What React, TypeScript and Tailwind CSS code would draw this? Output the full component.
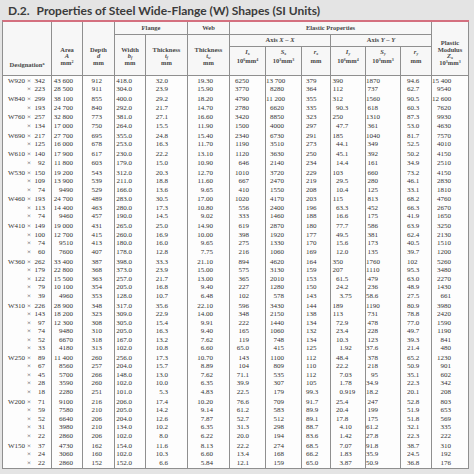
import React from 'react';

// AISC-style W shape table, SI units. Rows grouped by nominal depth.
type Group = { w: string; rows: string[][] };

const GROUPS: Group[] = [
	{ w: 'W920', rows: [
		['342', '43 600', '912', '418.0', '32.0', '19.30', '6250', '13 700', '379', '390', '1870', '94.6', '15 400'],
		['223', '28 500', '911', '304.0', '23.9', '15.90', '3770', '8280', '364', '112', '737', '62.7', '9540']
	] },
	{ w: 'W840', rows: [
		['299', '38 100', '855', '400.0', '29.2', '18.20', '4790', '11 200', '355', '312', '1560', '90.5', '12 600'],
		['193', '24 700', '840', '292.0', '21.7', '14.70', '2780', '6620', '335', '90.3', '618', '60.3', '7620']
	] },
	{ w: 'W760', rows: [
		['257', '32 800', '773', '381.0', '27.1', '16.60', '3420', '8850', '323', '250', '1310', '87.3', '9930'],
		['134', '17 000', '750', '264.0', '15.5', '11.90', '1500', '4000', '297', '47.7', '361', '53.0', '4630']
	] },
	{ w: 'W690', rows: [
		['217', '27 700', '695', '355.0', '24.8', '15.40', '2340', '6730', '291', '185', '1040', '81.7', '7570'],
		['125', '16 000', '678', '253.0', '16.3', '11.70', '1190', '3510', '273', '44.1', '349', '52.5', '4010']
	] },
	{ w: 'W610', rows: [
		['140', '17 900', '617', '230.0', '22.2', '13.10', '1120', '3630', '250', '45.1', '392', '50.2', '4150'],
		['92', '11 800', '603', '179.0', '15.0', '10.90', '646', '2140', '234', '14.4', '161', '34.9', '2510']
	] },
	{ w: 'W530', rows: [
		['150', '19 200', '543', '312.0', '20.3', '12.70', '1010', '3720', '229', '103', '660', '73.2', '4150'],
		['109', '13 900', '539', '211.0', '18.8', '11.60', '667', '2470', '219', '29.5', '280', '46.1', '2830'],
		['74', '9490', '529', '166.0', '13.6', '9.65', '410', '1550', '208', '10.4', '125', '33.1', '1810']
	] },
	{ w: 'W460', rows: [
		['193', '24 700', '489', '283.0', '30.5', '17.00', '1020', '4170', '203', '115', '813', '68.2', '4760'],
		['113', '14 400', '463', '280.0', '17.3', '10.80', '556', '2400', '196', '63.3', '452', '66.3', '2670'],
		['74', '9460', '457', '190.0', '14.5', '9.02', '333', '1460', '188', '16.6', '175', '41.9', '1650']
	] },
	{ w: 'W410', rows: [
		['149', '19 000', '431', '265.0', '25.0', '14.90', '619', '2870', '180', '77.7', '586', '63.9', '3250'],
		['100', '12 700', '415', '260.0', '16.9', '10.00', '398', '1920', '177', '49.5', '381', '62.4', '2130'],
		['74', '9510', '413', '180.0', '16.0', '9.65', '275', '1330', '170', '15.6', '173', '40.5', '1510'],
		['60', '7600', '407', '178.0', '12.8', '7.75', '216', '1060', '169', '12.0', '135', '39.7', '1200']
	] },
	{ w: 'W360', rows: [
		['262', '33 400', '387', '398.0', '33.3', '21.10', '894', '4620', '164', '350', '1760', '102', '5260'],
		['179', '22 800', '368', '373.0', '23.9', '15.00', '575', '3130', '159', '207', '1110', '95.3', '3480'],
		['122', '15 500', '363', '257.0', '21.7', '13.00', '365', '2010', '153', '61.5', '479', '63.0', '2270'],
		['79', '10 100', '354', '205.0', '16.8', '9.40', '227', '1280', '150', '24.2', '236', '48.9', '1430'],
		['39', '4960', '353', '128.0', '10.7', '6.48', '102', '578', '143', '3.75', '58.6', '27.5', '661']
	] },
	{ w: 'W310', rows: [
		['226', '28 900', '348', '317.0', '35.6', '22.10', '596', '3430', '144', '189', '1190', '80.9', '3980'],
		['143', '18 200', '323', '309.0', '22.9', '14.00', '348', '2150', '138', '113', '731', '78.8', '2420'],
		['97', '12 300', '308', '305.0', '15.4', '9.91', '222', '1440', '134', '72.9', '478', '77.0', '1590'],
		['74', '9480', '310', '205.0', '16.3', '9.40', '165', '1060', '132', '23.4', '228', '49.7', '1190'],
		['52', '6670', '318', '167.0', '13.2', '7.62', '119', '748', '134', '10.3', '123', '39.3', '841'],
		['33', '4180', '313', '102.0', '10.8', '6.60', '65.0', '415', '125', '1.92', '37.6', '21.4', '480']
	] },
	{ w: 'W250', rows: [
		['89', '11 400', '260', '256.0', '17.3', '10.70', '143', '1100', '112', '48.4', '378', '65.2', '1230'],
		['67', '8560', '257', '204.0', '15.7', '8.89', '104', '809', '110', '22.2', '218', '50.9', '901'],
		['45', '5700', '266', '148.0', '13.0', '7.62', '71.1', '535', '112', '7.03', '95', '35.1', '602'],
		['28', '3590', '260', '102.0', '10.0', '6.35', '39.9', '307', '105', '1.78', '34.9', '22.3', '342'],
		['18', '2280', '251', '101.0', '5.3', '4.83', '22.5', '179', '99.3', '0.919', '18.2', '20.1', '208']
	] },
	{ w: 'W200', rows: [
		['71', '9100', '216', '206.0', '17.4', '10.20', '76.6', '709', '91.7', '25.4', '247', '52.8', '803'],
		['59', '7580', '210', '205.0', '14.2', '9.14', '61.2', '583', '89.9', '20.4', '199', '51.9', '653'],
		['52', '6640', '206', '204.0', '12.6', '7.87', '52.7', '512', '89.1', '17.8', '175', '51.8', '569'],
		['31', '3980', '210', '134.0', '10.2', '6.35', '31.3', '298', '88.7', '4.10', '61.2', '32.1', '335'],
		['22', '2860', '206', '102.0', '8.0', '6.22', '20.0', '194', '83.6', '1.42', '27.8', '22.3', '222']
	] },
	{ w: 'W150', rows: [
		['37', '4730', '162', '154.0', '11.6', '8.13', '22.2', '274', '68.5', '7.07', '91.8', '38.7', '310'],
		['24', '3060', '160', '102.0', '10.3', '6.60', '13.4', '168', '66.2', '1.83', '35.9', '24.5', '192'],
		['22', '2860', '152', '152.0', '6.6', '5.84', '12.1', '159', '65.0', '3.87', '50.9', '36.8', '176']
	] }
];

/** How each numeric column lines up its figures (index 1..12 of a row) */
const COLS: { cls: string; dec?: boolean }[] = [
	{ cls: 'text-right pr-[9px]' },
	{ cls: 'text-right pr-[12px]' },
	{ cls: 'text-right pr-[13px]' },
	{ cls: 'text-right pr-[19px]' },
	{ cls: 'text-right pr-[16px]' },
	{ cls: 'text-right pr-[16px]' },
	{ cls: 'text-right pr-[17px]' },
	{ cls: 'text-left pl-[4px]' },
	{ cls: 'text-left', dec: true },
	{ cls: 'text-right pr-[22px]' },
	{ cls: 'text-left pl-[6px]' },
	{ cls: 'text-right pr-[17px]' }
];

const UNIT_COLS = ['col-start-7', 'col-start-8', 'col-start-9', 'col-start-10', 'col-start-11', 'col-start-12'];

const GRID = 'grid grid-cols-[49px_31px_32px_31px_42px_42px_36px_36px_29px_35px_35px_31px_37px]';
const LINE = 'border-[#8f8f8f]';

function Num({ v, dec }: { v: string; dec?: boolean }) {
	if (!dec) return <>{v}</>;
	const [int, frac] = v.split('.');
	return (
		<>
			<span className="inline-block w-[12px] text-right">{int}</span>
			{frac !== undefined ? `.${frac}` : ''}
		</>
	);
}

function HeadCell({ className, children }: { className: string; children: React.ReactNode }) {
	return (
		<div className={`flex flex-col items-center border-r border-b ${LINE} text-center ${className}`}>
			{children}
		</div>
	);
}

function Header() {
	return (
		<div className={`${GRID} grid-rows-[13px_12px_29px] bg-[#f7f7f7] font-['Liberation_Serif',serif] text-[6.5px] leading-[6.5px] font-bold text-[#474747]`}>
			<HeadCell className="col-start-1 row-span-3 row-start-1 justify-end pb-[7px]">
				<span>
					Designation<sup className="text-[4px]">a</sup>
				</span>
			</HeadCell>
			<HeadCell className="col-start-2 row-span-3 row-start-1 justify-end pb-[9px]">
				<span>Area</span>
				<span className="italic">A</span>
				<span>
					mm<sup className="text-[4px]">2</sup>
				</span>
			</HeadCell>
			<HeadCell className="col-start-3 row-span-3 row-start-1 justify-end pb-[9px]">
				<span>Depth</span>
				<span className="italic">d</span>
				<span>mm</span>
			</HeadCell>
			<HeadCell className="col-span-2 col-start-4 row-start-1 justify-center">
				<span>Flange</span>
			</HeadCell>
			<HeadCell className="col-start-6 row-start-1 justify-center">
				<span>Web</span>
			</HeadCell>
			<HeadCell className="col-span-6 col-start-7 row-start-1 justify-center">
				<span>Elastic Properties</span>
			</HeadCell>
			<HeadCell className="col-start-13 row-span-3 row-start-1 justify-end pb-[9px]">
				<span>Plastic</span>
				<span>Modulus</span>
				<span className="italic">
					Z<sub className="text-[4px]">x</sub>
				</span>
				<span>
					10<sup className="text-[4px]">3</sup>mm<sup className="text-[4px]">3</sup>
				</span>
			</HeadCell>
			<HeadCell className="col-start-4 row-span-2 row-start-2 justify-end pb-[9px]">
				<span>Width</span>
				<span className="italic">
					b<sub className="text-[4px]">f</sub>
				</span>
				<span>mm</span>
			</HeadCell>
			<HeadCell className="col-start-5 row-span-2 row-start-2 justify-end pb-[9px]">
				<span>Thickness</span>
				<span className="italic">
					t<sub className="text-[4px]">f</sub>
				</span>
				<span>mm</span>
			</HeadCell>
			<HeadCell className="col-start-6 row-span-2 row-start-2 justify-end pb-[9px]">
				<span>Thickness</span>
				<span className="italic">
					t<sub className="text-[4px]">w</sub>
				</span>
				<span>mm</span>
			</HeadCell>
			<HeadCell className="col-span-3 col-start-7 row-start-2 justify-center">
				<span>
					Axis <i>X</i> – <i>X</i>
				</span>
			</HeadCell>
			<HeadCell className="col-span-3 col-start-10 row-start-2 justify-center">
				<span>
					Axis <i>Y</i> – <i>Y</i>
				</span>
			</HeadCell>
			{[
				['I', 'x', '6', '4'],
				['S', 'x', '3', '3'],
				['r', 'x', '', ''],
				['I', 'y', '6', '4'],
				['S', 'y', '3', '3'],
				['r', 'y', '', '']
			].map(([sym, ax, p, q], i) => (
				<HeadCell key={i} className={`${UNIT_COLS[i]} row-start-3 justify-end gap-[2px] pb-[11px]`}>
					<span className="italic">
						{sym}
						<sub className="text-[4px]">{ax}</sub>
					</span>
					{p ? (
						<span>
							10<sup className="text-[4px]">{p}</sup>mm<sup className="text-[4px]">{q}</sup>
						</span>
					) : (
						<span>mm</span>
					)}
				</HeadCell>
			))}
		</div>
	);
}

function Body() {
	return (
		<div className={`bg-[#fdfdfd] font-['Liberation_Serif',serif] text-[7px] text-[#333] border-b ${LINE}`}>
			{GROUPS.map((g) => (
				<div key={g.w} className={GRID}>
					<div className={`border-r ${LINE} py-[0.7px]`}>
						{g.rows.map((r, i) => (
							<div key={i} className="flex h-[8.5px] items-center whitespace-nowrap leading-[8.5px]">
								<span className="inline-block w-[22px] text-right">{i === 0 ? g.w : ''}</span>
								<span className="inline-block w-[8px] text-center">×</span>
								<span className="inline-block w-[12px] text-right">{r[0]}</span>
							</div>
						))}
					</div>
					{COLS.map((c, ci) => (
						<div key={ci} className={`border-r ${LINE} py-[0.7px]`}>
							{g.rows.map((r, i) => (
								<div key={i} className={`h-[8.5px] whitespace-nowrap leading-[8.5px] ${c.cls}`}>
									<Num v={r[ci + 1]} dec={c.dec} />
								</div>
							))}
						</div>
					))}
				</div>
			))}
		</div>
	);
}

export default function App() {
	return (
		<div className="h-[474px] w-[474px] overflow-hidden bg-[#e4e4e4]">
			<div className="flex h-[20px] items-end pb-[3px] pl-[8px] font-['Lato',sans-serif] text-[12px] leading-none font-bold text-[#3b3b3b]">
				<span className="mr-[7px]">D.2.</span>
				<span>Properties of Steel Wide-Flange (W) Shapes (SI Units)</span>
			</div>
			<div className={`ml-[2px] w-[467px] border-t-2 border-l border-t-[#d4707f] ${LINE}`}>
				<Header />
				<Body />
			</div>
		</div>
	);
}
